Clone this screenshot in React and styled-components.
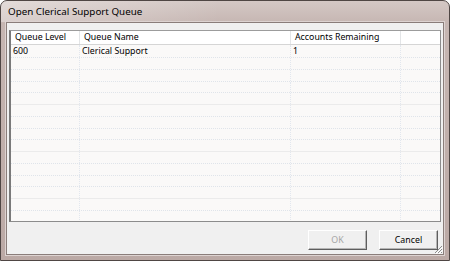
import styled, { createGlobalStyle } from 'styled-components'

const GlobalStyle = createGlobalStyle`
  html, body {
    margin: 0;
    padding: 0;
    background: #ffffff;
  }
  body {
    font-family: 'Noto Sans', 'DejaVu Sans', sans-serif;
  }
`

const columns = [
  { key: 'level', label: 'Queue Level', width: 69 },
  { key: 'name', label: 'Queue Name', width: 211 },
  { key: 'remaining', label: 'Accounts Remaining', width: 110 },
  { key: 'blank', label: '', width: 38 }
]

const queues = [{ level: '600', name: 'Clerical Support', remaining: '1', blank: '' }]

const Window = styled.div`
  width: 450px;
  height: 261px;
  box-sizing: border-box;
  display: flex;
  flex-direction: column;
  border: 1px solid #4f4644;
  border-radius: 7px 7px 0 0;
  background: linear-gradient(180deg, #d4c8c5 0px, #c6b6b2 22px, #bba9a5 100%);
  padding: 0 5px 5px 5px;
  overflow: hidden;
`
const TitleBar = styled.div`
  height: 21px;
  display: flex;
  align-items: center;
  font-size: 9.8px;
  color: #000;
  background: linear-gradient(90deg, rgba(255, 255, 255, 0.35) 0, rgba(255, 255, 255, 0) 220px);
  margin: 0 -5px;
  padding: 0 0 0 7px;
`
const Client = styled.div`
  flex: 1;
  display: flex;
  flex-direction: column;
  background: #f0f0f0;
  border: 1px solid #8a7d7a;
  box-shadow: 0 0 0 1px #ddd3d1;
  padding: 7px 2px 3px 2px;
  position: relative;
`
const ListView = styled.div`
  height: 192px;
  box-sizing: border-box;
  border: 1px solid #8c8c8c;
  border-left: 2px solid #7a7a7a;
  border-top-color: #9c9c9c;
  background: #faf9f8;
  overflow: hidden;
  font-size: 8.8px;
  color: #000;
`
const HeaderRow = styled.div`
  display: flex;
  height: 13px;
  background: #ffffff;
  border-bottom: 1px solid #d5d5d5;
`
const HeaderCell = styled.div`
  width: ${(p) => p.$w}px;
  flex: ${(p) => (p.$last ? 1 : 'none')};
  box-sizing: border-box;
  padding-left: 4px;
  line-height: 13px;
  border-right: ${(p) => (p.$last ? 'none' : '1px solid #e3e5e7')};
  white-space: nowrap;
`
const Row = styled.div`
  display: flex;
  height: ${(p) => p.$h}px;
  box-sizing: border-box;
  border-bottom: 1px ${(p) => (p.$solid ? 'solid #ebebeb' : 'dotted #dfe4ea')};
`
const Cell = styled.div`
  width: ${(p) => p.$w}px;
  flex: ${(p) => (p.$last ? 1 : 'none')};
  box-sizing: border-box;
  padding-left: 2px;
  line-height: 12px;
  border-right: ${(p) => (p.$last ? 'none' : '1px dotted #e2e7ee')};
  white-space: nowrap;
`
const Footer = styled.div`
  display: flex;
  justify-content: flex-end;
  gap: 12px;
  padding: 8px 3px 0 0;
`
const Button = styled.button`
  width: 59px;
  height: 20px;
  box-sizing: border-box;
  margin: 0;
  padding: 0;
  font-family: 'Noto Sans', 'DejaVu Sans', sans-serif;
  font-size: 8.8px;
  color: ${(p) => (p.disabled ? '#a6a6a6' : '#000')};
  background: #f0f0f0;
  border: 1px solid;
  border-color: #ffffff #5e5e5e #5e5e5e #ffffff;
  box-shadow: inset -1px -1px 0 #b5b5b5;
`
const Grip = styled.svg`
  position: absolute;
  right: 0;
  bottom: 0;
`

function App() {
  const bodyRows = Array.from({ length: 15 }, (_, i) => queues[i] || null)
  return (
    <>
      <GlobalStyle />
      <Window>
        <TitleBar>Open Clerical Support Queue</TitleBar>
        <Client>
          <ListView>
            <HeaderRow>
              {columns.map((c, i) => (
                <HeaderCell key={c.key} $w={c.width} $last={i === columns.length - 1}>
                  {c.label}
                </HeaderCell>
              ))}
            </HeaderRow>
            {bodyRows.map((r, i) => (
              <Row key={i} $h={i === 0 ? 13 : 11.75} $solid={i % 4 === 0 && i > 0}>
                {columns.map((c, j) => (
                  <Cell key={c.key} $w={c.width} $last={j === columns.length - 1}>
                    {r ? r[c.key] : ''}
                  </Cell>
                ))}
              </Row>
            ))}
          </ListView>
          <Footer>
            <Button disabled>OK</Button>
            <Button>Cancel</Button>
          </Footer>
          <Grip width="10" height="10" viewBox="0 0 10 10">
            <path d="M9 2 L2 9 M9 5 L5 9 M9 8 L8 9" stroke="#8a8a8a" strokeWidth="1" />
            <path d="M10 3 L3 10 M10 6 L6 10" stroke="#ffffff" strokeWidth="1" />
          </Grip>
        </Client>
      </Window>
    </>
  )
}

export default App
